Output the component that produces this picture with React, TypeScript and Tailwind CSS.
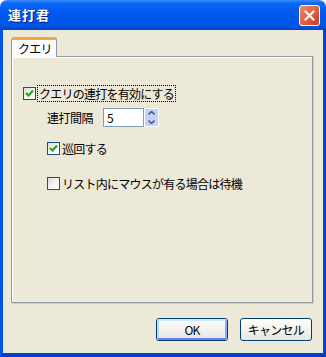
import React from 'react'

const font = "font-['Noto_Sans_CJK_JP','Noto_Sans',sans-serif]"

const CheckBox = ({ checked }: { checked: boolean }) => (
  <div className="w-[13px] h-[13px] border border-[#1c5180] bg-gradient-to-br from-[#dcdcd7] via-[#f4f4f0] to-white flex items-center justify-center shrink-0">
    {checked && (
      <svg width="9" height="9" viewBox="0 0 9 9">
        <path d="M1 4 L3.5 6.5 L8 1.5" fill="none" stroke="#21a121" strokeWidth="2" />
      </svg>
    )}
  </div>
)

type ButtonProps = { label: string; isDefault?: boolean }

const XpButton = ({ label, isDefault }: ButtonProps) => (
  <div className="w-[72px] h-[23px] rounded-[3px] border border-[#003c74] bg-gradient-to-b from-white to-[#e6e5df] flex items-center justify-center">
    <div
      className={
        isDefault
          ? 'w-full h-full rounded-[2px] border-2 border-t-[#cee7ff] border-l-[#bcd4f6] border-r-[#89adf4] border-b-[#6982ee] flex items-center justify-center'
          : 'w-full h-full flex items-center justify-center'
      }
    >
      <span className="text-[12px] tracking-[-0.75px] text-black leading-none">{label}</span>
    </div>
  </div>
)

export default function App() {
  return (
    <div className={`w-[326px] h-[357px] flex flex-col ${font}`}>
      {/* title bar */}
      <div className="h-[30px] rounded-t-[7px] bg-[linear-gradient(to_bottom,#3c8cff_0%,#0b6af7_10%,#0058ee_40%,#0055e8_85%,#0046c8_100%)] flex items-center justify-between pl-[8px] pr-[6px] shrink-0">
        <span className="text-white font-bold text-[13px] tracking-[1px] [text-shadow:1px_1px_0_#0a1e80]">連打君</span>
        <div className="w-[21px] h-[21px] rounded-[3px] border border-white bg-gradient-to-br from-[#e98b6c] via-[#e2613f] to-[#c43f1e] flex items-center justify-center">
          <svg width="11" height="11" viewBox="0 0 11 11">
            <path d="M1.5 1.5 L9.5 9.5 M9.5 1.5 L1.5 9.5" stroke="white" strokeWidth="2.2" strokeLinecap="square" />
          </svg>
        </div>
      </div>

      {/* client area */}
      <div className="flex-1 flex flex-col bg-[#ece9d8] border-l-[3px] border-r-[3px] border-b-[4px] border-l-[#0055e8] border-r-[#0044d8] border-b-[#0040d0] pt-[7px] pl-[8px] pr-[10px] pb-[12px]">
        {/* tab */}
        <div className="flex">
          <div className="relative z-10 -mb-px w-[46px] h-[20px] bg-[#fcfcfe] border-x border-[#919b9c] border-t-[3px] border-t-[#f2a93a] rounded-t-[3px] flex items-center pl-[6px]">
            <span className="text-[12px] tracking-[-0.75px] leading-none text-black">クエリ</span>
          </div>
        </div>

        {/* panel */}
        <div className="h-[247px] border border-[#919b9c] shadow-[1px_1px_0_#d0cebf,inset_1px_1px_0_#ffffff] bg-[#ece9d8] flex flex-col pt-[28px] pl-[11px]">
          <div className="flex items-center h-[17px]">
            <CheckBox checked />
            <span className="ml-[1px] h-[17px] border border-dotted border-black px-[1px] flex items-center text-[12px] tracking-[-0.75px] text-black">
              クエリの連打を有効にする
            </span>
          </div>

          <div className="flex items-center h-[19px] mt-[6px] pl-[24px]">
            <span className="w-[56px] text-[12px] tracking-[-0.5px] text-black">連打間隔</span>
            <div className="w-[41px] h-[19px] border border-[#7f9db9] bg-white flex items-center pl-[3px]">
              <span className="text-[12px] text-black">5</span>
            </div>
            <div className="w-[15px] h-[19px] border border-white bg-[#c3d3fd] flex flex-col">
              <div className="flex-1 flex items-center justify-center">
                <svg width="7" height="4" viewBox="0 0 7 4">
                  <path d="M0.5 3.5 L3.5 0.5 L6.5 3.5" fill="none" stroke="#4d6185" strokeWidth="1.6" />
                </svg>
              </div>
              <div className="flex-1 flex items-center justify-center">
                <svg width="7" height="4" viewBox="0 0 7 4">
                  <path d="M0.5 0.5 L3.5 3.5 L6.5 0.5" fill="none" stroke="#4d6185" strokeWidth="1.6" />
                </svg>
              </div>
            </div>
          </div>

          <div className="flex items-center h-[17px] mt-[13px] pl-[24px]">
            <CheckBox checked />
            <span className="ml-[2px] text-[12px] tracking-[-0.75px] text-black">巡回する</span>
          </div>

          <div className="flex items-center h-[17px] mt-[18px] pl-[24px]">
            <CheckBox checked={false} />
            <span className="ml-[2px] text-[12px] tracking-[-0.75px] text-black">リスト内にマウスが有る場合は待機</span>
          </div>
        </div>

        {/* buttons */}
        <div className="mt-auto flex justify-end gap-[12px] pr-[1px]">
          <XpButton label="OK" isDefault />
          <XpButton label="キャンセル" />
        </div>
      </div>
    </div>
  )
}
